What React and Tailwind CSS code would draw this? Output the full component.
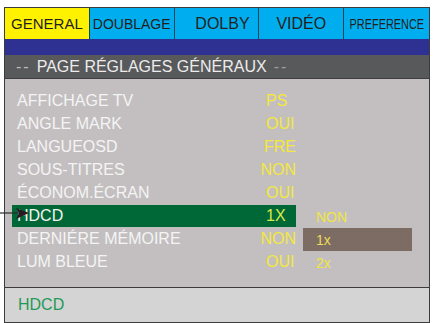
import React from 'react';

const tabs = [
  { label: 'GENERAL', cls: 'bg-[#fff200] text-[15px]' },
  { label: 'DOUBLAGE', cls: 'bg-[#00aeef] text-[14px]' },
  { label: 'DOLBY', cls: 'bg-[#00aeef] text-[16px] pl-3' },
  { label: 'VIDÉO', cls: 'bg-[#00aeef] text-[16px]' },
  { label: 'PREFERENCE', cls: 'bg-[#00aeef] text-[14px]', narrow: true },
];

const rows = [
  { label: 'AFFICHAGE TV', value: 'PS' },
  { label: 'ANGLE MARK', value: 'OUI' },
  { label: 'LANGUEOSD', value: 'FRE' },
  { label: 'SOUS-TITRES', value: 'NON' },
  { label: 'ÉCONOM.ÉCRAN', value: 'OUI' },
  { label: 'HDCD', value: '1X', active: true, sub: 'NON' },
  { label: 'DERNIÉRE MÉMOIRE', value: 'NON', sub: '1x', subActive: true },
  { label: 'LUM BLEUE', value: 'OUI', sub: '2x' },
];

export default function App() {
  return (
    <div className="relative w-[434px] h-[323px] bg-white pl-[4px] pt-[7px] font-['Liberation_Sans',Arial,sans-serif] overflow-hidden">
      <div className="w-[426px] border border-[#3c3c3c] flex flex-col">
        {/* tabs */}
        <div className="grid grid-cols-5 h-[31px]">
          {tabs.map((t, i) => (
            <div
              key={t.label}
              className={`flex items-center justify-center text-[#231f20] leading-none ${t.cls} ${i < 4 ? 'border-r border-[#1d4456]' : ''}`}
            >
              {t.narrow ? <span className="inline-block scale-x-[0.78] whitespace-nowrap">{t.label}</span> : t.label}
            </div>
          ))}
        </div>
        <div className="h-[16px] bg-[#2e3192]" />
        <div className="h-[24px] bg-[#58595b] border-b border-[#3d3d3d] flex items-center pl-[11px] text-[16px] leading-none whitespace-nowrap">
          <span className="text-[#bdbdbd] tracking-[2px]">--</span>
          <span className="text-[#ececec] ml-[6px]">PAGE RÉGLAGES GÉNÉRAUX</span>
          <span className="text-[#9e9e9e] ml-[7px] tracking-[2px]">--</span>
        </div>

        {/* menu rows */}
        <div className="bg-[#c3bfc0] pt-[11px] pb-[13px] border-b border-[#3c3c3c]">
          {rows.map((r) => (
            <div key={r.label} className="h-[23px] flex items-stretch pl-[7px]">
              <div className={`w-[284px] h-[22px] flex items-center leading-none text-[16px] ${r.active ? 'bg-[#006837]' : ''}`}>
                <span className="w-[254px] pl-[5px] text-[#f4f4f4] whitespace-nowrap">{r.label}</span>
                <span className={r.active ? 'text-[#d8e84a]' : 'text-[#f3e83c]'}>{r.value}</span>
              </div>
              <div className={`ml-[7px] w-[109px] h-[23px] flex items-center pl-[13px] text-[14px] leading-none ${r.subActive ? 'bg-[#7d6c64] text-[#eadb55]' : 'text-[#f0e640]'}`}>
                {r.sub}
              </div>
            </div>
          ))}
        </div>

        {/* status */}
        <div className="h-[34px] bg-[#d4d4d4] flex items-center pl-[13px] text-[16px] leading-none text-[#1f9a56]">
          HDCD
        </div>
      </div>

      <svg className="absolute left-0 top-[205px]" width="32" height="16" viewBox="0 0 32 16">
        <line x1="0" y1="8" x2="20" y2="8" stroke="#2b2b2b" strokeWidth="1.2" />
        <polygon points="16,3 29,8 16,14 19,8" fill="#2a1a1e" />
      </svg>
    </div>
  );
}
